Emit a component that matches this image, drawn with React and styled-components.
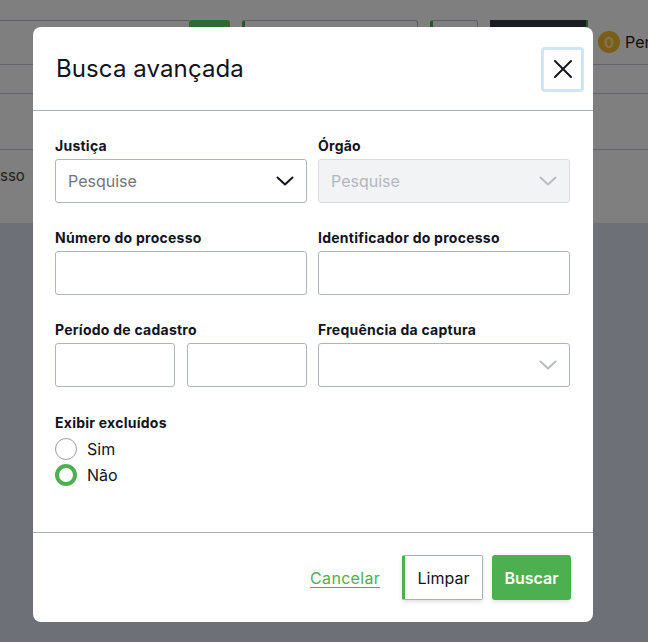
import styled, { createGlobalStyle } from "styled-components"

const GlobalStyle = createGlobalStyle`
  html, body {
    margin: 0;
    padding: 0;
    font-family: Inter, "Noto Sans", sans-serif;
    color: #11131f;
  }
  * { box-sizing: border-box; }
`

function Chevron({ disabled }) {
  return (
    <svg width="18" height="10" viewBox="0 0 18 10" fill="none">
      <path
        d="M1.5 1.5 L9 8.5 L16.5 1.5"
        stroke={disabled ? "#b9bcc4" : "#14161f"}
        strokeWidth="2"
        strokeLinecap="round"
        strokeLinejoin="round"
      />
    </svg>
  )
}

function CloseIcon() {
  return (
    <svg width="20" height="20" viewBox="0 0 20 20" fill="none">
      <path d="M2 2 L18 18 M18 2 L2 18" stroke="#14161f" strokeWidth="2" strokeLinecap="round" />
    </svg>
  )
}

export default function App() {
  return (
    <>
      <GlobalStyle />
      <Page>
        <Toolbar>
          <SearchBox />
          <ToolButton />
          <ToolInput />
          <SmallBox />
          <DarkBox />
          <Badge>
            <Coin>0</Coin>
            <span>Pendentes</span>
          </Badge>
        </Toolbar>
        <Table>
          <TableRow height={29} />
          <TableRow height={56} />
          <TableRow height={73}>
            <CellText>sso</CellText>
          </TableRow>
        </Table>

        <Overlay>
          <Modal>
            <Header>
              <Title>Busca avançada</Title>
              <CloseButton aria-label="Fechar"><CloseIcon /></CloseButton>
            </Header>

            <Body>
              <Grid>
                <Field>
                  <Label>Justiça</Label>
                  <Select>
                    <span>Pesquise</span>
                    <Chevron />
                  </Select>
                </Field>
                <Field>
                  <Label>Órgão</Label>
                  <Select disabled>
                    <span>Pesquise</span>
                    <Chevron disabled />
                  </Select>
                </Field>

                <Field>
                  <Label>Número do processo</Label>
                  <Input />
                </Field>
                <Field>
                  <Label>Identificador do processo</Label>
                  <Input />
                </Field>

                <Field>
                  <Label>Período de cadastro</Label>
                  <DateRow>
                    <Input />
                    <Input />
                  </DateRow>
                </Field>
                <Field>
                  <Label>Frequência da captura</Label>
                  <Select>
                    <span />
                    <Chevron disabled />
                  </Select>
                </Field>
              </Grid>

              <RadioGroup>
                <Label>Exibir excluídos</Label>
                <RadioOption>
                  <Radio />
                  Sim
                </RadioOption>
                <RadioOption>
                  <Radio checked />
                  Não
                </RadioOption>
              </RadioGroup>
            </Body>

            <Footer>
              <LinkButton>Cancelar</LinkButton>
              <OutlineButton>Limpar</OutlineButton>
              <PrimaryButton>Buscar</PrimaryButton>
            </Footer>
          </Modal>
        </Overlay>
      </Page>
    </>
  )
}

const Page = styled.div`
  position: relative;
  width: 648px;
  height: 642px;
  overflow: hidden;
  background: #dde0f1;
`
const Toolbar = styled.div`
  display: flex;
  align-items: flex-start;
  height: 64px;
  padding-top: 20px;
  background: #fff;
  & > * { flex-shrink: 0; }
`
const SearchBox = styled.div`
  width: 189px;
  height: 44px;
  border-top: 1px solid #bcbccb;
`
const ToolButton = styled.div`
  width: 41px;
  height: 44px;
  background: #5bd361;
  border-radius: 3px 3px 0 0;
`
const ToolInput = styled.div`
  width: 176px;
  height: 44px;
  margin-left: 12px;
  border: 1px solid #bcbccb;
  border-left: 3px solid #4caf50;
  border-bottom: none;
  border-radius: 3px 3px 0 0;
`
const SmallBox = styled(ToolInput)`
  width: 48px;
  margin-left: 12px;
`
const DarkBox = styled.div`
  width: 98px;
  height: 44px;
  margin-left: 12px;
  background: #363a42;
  border-right: 2px solid #4caf50;
`
const Badge = styled.div`
  display: flex;
  align-items: center;
  gap: 5px;
  margin: 11px 0 0 10px;
  font-size: 16px;
  white-space: nowrap;
  color: #1a1a1a;
`
const Coin = styled.span`
  display: inline-flex;
  align-items: center;
  justify-content: center;
  width: 22px;
  height: 22px;
  border-radius: 50%;
  background: #f5bd2f;
  color: #fde89a;
  font-weight: 700;
  font-size: 15px;
`
const Table = styled.div`
  background: #fff;
  border-top: 1px solid #c6c6d2;
`
const TableRow = styled.div`
  height: ${(p) => p.height}px;
  border-bottom: 1px solid #c6c6d2;
  display: flex;
  align-items: flex-start;
  padding-top: 16px;
  &:last-child { border-bottom: none; }
`
const CellText = styled.span`
  font-size: 15px;
  color: #444;
`
const Overlay = styled.div`
  position: absolute;
  inset: 0;
  background: rgba(0, 0, 0, 0.5);
  padding: 27px 0 0 33px;
`
const Modal = styled.div`
  width: 560px;
  height: 595px;
  background: #fff;
  border-radius: 8px;
  display: flex;
  flex-direction: column;
  overflow: hidden;
`
const Header = styled.header`
  height: 84px;
  flex-shrink: 0;
  display: flex;
  align-items: center;
  justify-content: space-between;
  padding: 0 9px 0 23px;
  border-bottom: 1px solid #a9adbf;
`
const Title = styled.h2`
  margin: 0;
  font-size: 24px;
  font-weight: 400;
  letter-spacing: 0.1px;
  color: #11131f;
`
const CloseButton = styled.button`
  width: 43px;
  height: 45px;
  margin-top: 1px;
  display: flex;
  align-items: center;
  justify-content: center;
  background: #fff;
  border: 3px solid #cfe5fb;
  border-radius: 4px;
  padding: 0;
`
const Body = styled.div`
  flex-grow: 1;
  padding: 25px 23px 0 22px;
  border-bottom: 1px solid #a9adbf;
`
const Grid = styled.div`
  display: grid;
  grid-template-columns: 252px 252px;
  column-gap: 11px;
  row-gap: 25px;
`
const Field = styled.div`
  display: flex;
  flex-direction: column;
`
const Label = styled.label`
  font-size: 14px;
  font-weight: 700;
  line-height: 20px;
  margin-bottom: 3px;
  color: #11131f;
  letter-spacing: 0.25px;
`
const boxBase = `
  height: 44px;
  border: 1px solid #b0b3c5;
  border-radius: 3px;
  background: #fff;
`
const Select = styled.div`
  ${boxBase}
  display: flex;
  align-items: center;
  justify-content: space-between;
  padding: 0 12px 1px 12px;
  font-size: 16px;
  color: ${(p) => (p.disabled ? "#b4b6bd" : "#72747c")};
  background: ${(p) => (p.disabled ? "#f2f3f5" : "#fff")};
  border-color: ${(p) => (p.disabled ? "#d9dbe0" : "#b0b3c5")};
`
const Input = styled.div`
  ${boxBase}
  width: 100%;
`
const DateRow = styled.div`
  display: grid;
  grid-template-columns: 1fr 1fr;
  gap: 12px;
`
const RadioGroup = styled.div`
  display: flex;
  flex-direction: column;
  margin-top: 26px;
  ${Label} { margin-bottom: 3px; }
`
const RadioOption = styled.div`
  display: flex;
  align-items: center;
  gap: 10px;
  height: 26px;
  font-size: 16px;
  color: #11131f;
`
const Radio = styled.span`
  width: 22px;
  height: 22px;
  border-radius: 50%;
  background: #fff;
  border: ${(p) => (p.checked ? "4px solid #4caf50" : "1px solid #9c9ea6")};
`
const Footer = styled.footer`
  height: 89px;
  flex-shrink: 0;
  display: flex;
  align-items: center;
  justify-content: flex-end;
  padding: 0 22px 0 0;
  gap: 9px;
`
const LinkButton = styled.a`
  font-size: 16px;
  color: #4caf50;
  text-decoration: underline;
  text-underline-offset: 3px;
  margin-right: 13px;
  letter-spacing: 0.3px;
  cursor: pointer;
`
const OutlineButton = styled.button`
  width: 81px;
  height: 45px;
  font-family: inherit;
  font-size: 16px;
  color: #11131f;
  background: #fff;
  border: 1px solid #a9adbf;
  border-left: 3px solid #4caf50;
  border-radius: 2px;
  box-shadow: 0 2px 4px rgba(0, 0, 0, 0.12);
`
const PrimaryButton = styled.button`
  width: 79px;
  height: 45px;
  font-family: inherit;
  font-size: 16px;
  font-weight: 600;
  color: #fff;
  background: #4caf50;
  border: none;
  border-radius: 3px;
  box-shadow: 0 2px 4px rgba(0, 0, 0, 0.12);
`
